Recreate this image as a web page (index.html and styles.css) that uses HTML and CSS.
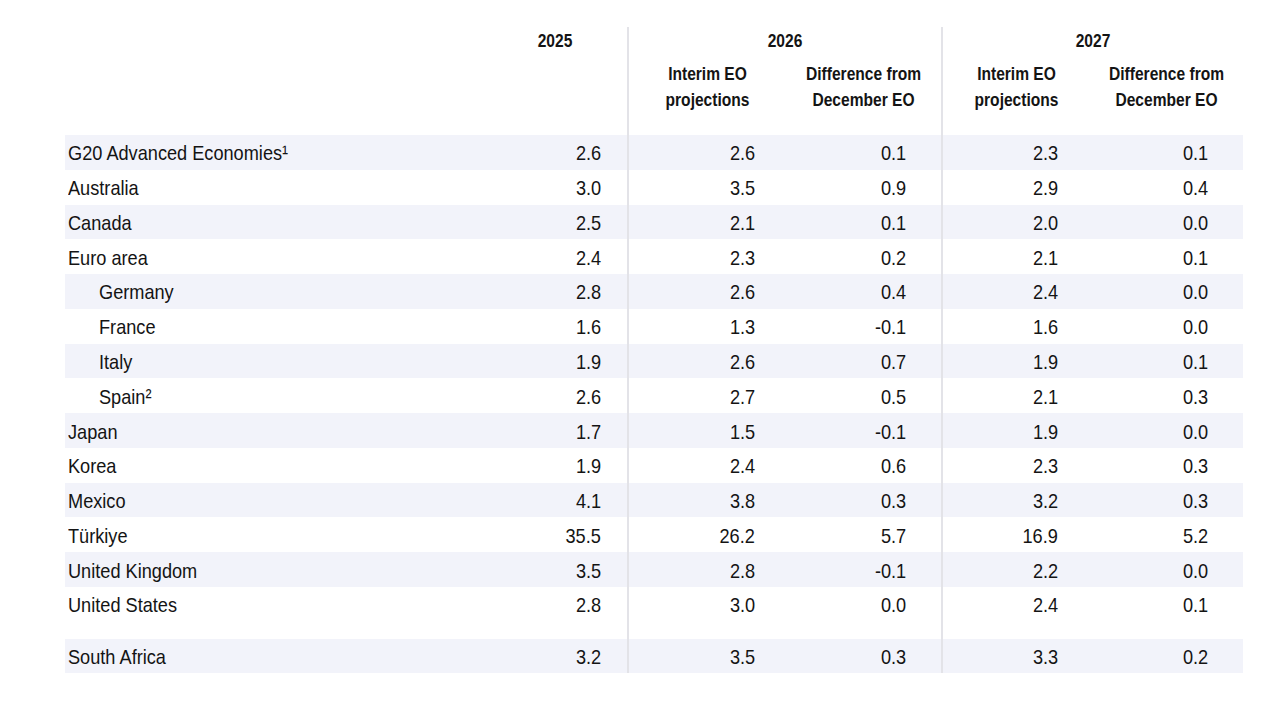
FILE: index.html
```html
<!DOCTYPE html>
<html lang="en">
<head>
<meta charset="utf-8">
<title>Interim EO projections</title>
<link rel="stylesheet" href="styles.css">
</head>
<body>
<div class="frame">
<table class="proj">
  <colgroup>
    <col class="c-label"><col class="c-25"><col class="c-26a"><col class="c-26b"><col class="c-27a"><col class="c-27b">
  </colgroup>
  <thead>
    <tr class="h1">
      <th></th>
      <th class="yr"><span class="t">2025</span></th>
      <th class="yr div" colspan="2"><span class="t">2026</span></th>
      <th class="yr div" colspan="2"><span class="t">2027</span></th>
    </tr>
    <tr class="h2">
      <th></th>
      <th></th>
      <th class="sub div"><span class="t">Interim EO<br>projections</span></th>
      <th class="sub"><span class="t">Difference from<br>December EO</span></th>
      <th class="sub div"><span class="t">Interim EO<br>projections</span></th>
      <th class="sub"><span class="t">Difference from<br>December EO</span></th>
    </tr>
  </thead>
  <tbody>
    <tr class="s"><td class="lab"><span class="t">G20 Advanced Economies¹</span></td><td class="v v25"><span class="t">2.6</span></td><td class="v va div"><span class="t">2.6</span></td><td class="v vb"><span class="t">0.1</span></td><td class="v va div"><span class="t">2.3</span></td><td class="v vb"><span class="t">0.1</span></td></tr>
    <tr><td class="lab"><span class="t">Australia</span></td><td class="v v25"><span class="t">3.0</span></td><td class="v va div"><span class="t">3.5</span></td><td class="v vb"><span class="t">0.9</span></td><td class="v va div"><span class="t">2.9</span></td><td class="v vb"><span class="t">0.4</span></td></tr>
    <tr class="s"><td class="lab"><span class="t">Canada</span></td><td class="v v25"><span class="t">2.5</span></td><td class="v va div"><span class="t">2.1</span></td><td class="v vb"><span class="t">0.1</span></td><td class="v va div"><span class="t">2.0</span></td><td class="v vb"><span class="t">0.0</span></td></tr>
    <tr><td class="lab"><span class="t">Euro area</span></td><td class="v v25"><span class="t">2.4</span></td><td class="v va div"><span class="t">2.3</span></td><td class="v vb"><span class="t">0.2</span></td><td class="v va div"><span class="t">2.1</span></td><td class="v vb"><span class="t">0.1</span></td></tr>
    <tr class="s"><td class="lab ind"><span class="t">Germany</span></td><td class="v v25"><span class="t">2.8</span></td><td class="v va div"><span class="t">2.6</span></td><td class="v vb"><span class="t">0.4</span></td><td class="v va div"><span class="t">2.4</span></td><td class="v vb"><span class="t">0.0</span></td></tr>
    <tr><td class="lab ind"><span class="t">France</span></td><td class="v v25"><span class="t">1.6</span></td><td class="v va div"><span class="t">1.3</span></td><td class="v vb"><span class="t">-0.1</span></td><td class="v va div"><span class="t">1.6</span></td><td class="v vb"><span class="t">0.0</span></td></tr>
    <tr class="s"><td class="lab ind"><span class="t">Italy</span></td><td class="v v25"><span class="t">1.9</span></td><td class="v va div"><span class="t">2.6</span></td><td class="v vb"><span class="t">0.7</span></td><td class="v va div"><span class="t">1.9</span></td><td class="v vb"><span class="t">0.1</span></td></tr>
    <tr><td class="lab ind"><span class="t">Spain²</span></td><td class="v v25"><span class="t">2.6</span></td><td class="v va div"><span class="t">2.7</span></td><td class="v vb"><span class="t">0.5</span></td><td class="v va div"><span class="t">2.1</span></td><td class="v vb"><span class="t">0.3</span></td></tr>
    <tr class="s"><td class="lab"><span class="t">Japan</span></td><td class="v v25"><span class="t">1.7</span></td><td class="v va div"><span class="t">1.5</span></td><td class="v vb"><span class="t">-0.1</span></td><td class="v va div"><span class="t">1.9</span></td><td class="v vb"><span class="t">0.0</span></td></tr>
    <tr><td class="lab"><span class="t">Korea</span></td><td class="v v25"><span class="t">1.9</span></td><td class="v va div"><span class="t">2.4</span></td><td class="v vb"><span class="t">0.6</span></td><td class="v va div"><span class="t">2.3</span></td><td class="v vb"><span class="t">0.3</span></td></tr>
    <tr class="s"><td class="lab"><span class="t">Mexico</span></td><td class="v v25"><span class="t">4.1</span></td><td class="v va div"><span class="t">3.8</span></td><td class="v vb"><span class="t">0.3</span></td><td class="v va div"><span class="t">3.2</span></td><td class="v vb"><span class="t">0.3</span></td></tr>
    <tr><td class="lab"><span class="t">Türkiye</span></td><td class="v v25"><span class="t">35.5</span></td><td class="v va div"><span class="t">26.2</span></td><td class="v vb"><span class="t">5.7</span></td><td class="v va div"><span class="t">16.9</span></td><td class="v vb"><span class="t">5.2</span></td></tr>
    <tr class="s"><td class="lab"><span class="t">United Kingdom</span></td><td class="v v25"><span class="t">3.5</span></td><td class="v va div"><span class="t">2.8</span></td><td class="v vb"><span class="t">-0.1</span></td><td class="v va div"><span class="t">2.2</span></td><td class="v vb"><span class="t">0.0</span></td></tr>
    <tr><td class="lab"><span class="t">United States</span></td><td class="v v25"><span class="t">2.8</span></td><td class="v va div"><span class="t">3.0</span></td><td class="v vb"><span class="t">0.0</span></td><td class="v va div"><span class="t">2.4</span></td><td class="v vb"><span class="t">0.1</span></td></tr>
    <tr class="gap"><td></td><td></td><td class="div"></td><td></td><td class="div"></td><td></td></tr>
    <tr class="s"><td class="lab"><span class="t">South Africa</span></td><td class="v v25"><span class="t">3.2</span></td><td class="v va div"><span class="t">3.5</span></td><td class="v vb"><span class="t">0.3</span></td><td class="v va div"><span class="t">3.3</span></td><td class="v vb"><span class="t">0.2</span></td></tr>
  </tbody>
</table>
</div>
</body>
</html>
```

FILE: styles.css
```css
html, body {
  margin: 0;
  padding: 0;
  background: #ffffff;
}

body {
  font-family: "Liberation Sans", Arial, sans-serif;
  color: #141414;
}

.frame {
  padding-top: 27px;
  padding-left: 65px;
}

.proj {
  width: 1178px;
  table-layout: fixed;
  border-collapse: collapse;
  border-spacing: 0;
}

.c-label { width: 419px; }
.c-25 { width: 144px; }
.c-26a { width: 159px; }
.c-26b { width: 155px; }
.c-27a { width: 148px; }
.c-27b { width: 153px; }

.proj th,
.proj td {
  padding: 0;
  font-size: 21px;
  font-weight: normal;
  vertical-align: middle;
  white-space: nowrap;
}

/* The source is set in a narrow face: each text run is condensed horizontally */
.t {
  display: inline-block;
  transform: scaleX(0.865);
}

.proj th.div,
.proj td.div {
  border-left: 2px solid #e3e3e8;
}

.h1 th {
  height: 28px;
}

.yr,
.sub {
  font-size: 18px !important;
  font-weight: bold !important;
  text-align: center;
  line-height: 26px;
}

.yr .t,
.sub .t {
  transform-origin: 50% 50%;
}

.h2 th {
  height: 80px;
  padding-top: 6px;
  padding-bottom: 22px;
  box-sizing: border-box;
}

tbody td {
  height: 34.77px;
  line-height: 24px;
}

tbody td .t {
  padding-top: 2px;
}

tbody tr.s td {
  background: #f2f3fa;
}

.lab {
  text-align: left;
  padding-left: 3px !important;
}

.lab .t {
  transform-origin: 0 50%;
}

.lab.ind {
  padding-left: 34px !important;
}

.v {
  text-align: right;
}

.v .t {
  transform-origin: 100% 50%;
}

.v25 { padding-right: 26px !important; }
.va { padding-right: 32px !important; }
.vb { padding-right: 35px !important; }

.proj tr.gap td {
  height: 17px;
  background: transparent;
}
```
